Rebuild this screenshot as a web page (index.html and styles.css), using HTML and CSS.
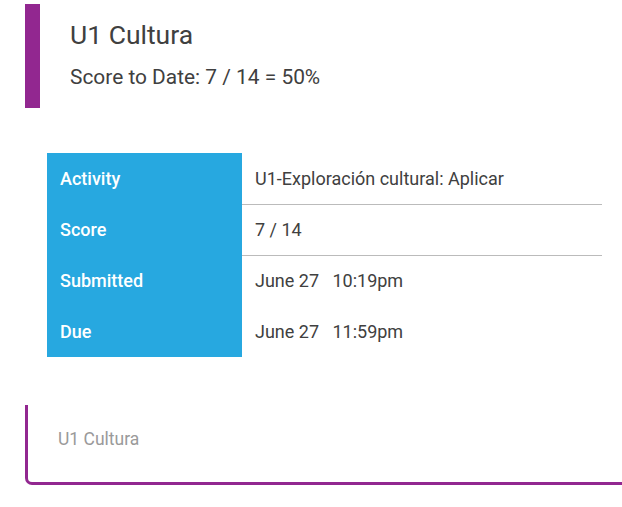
FILE: index.html
```html
<!DOCTYPE html>
<html lang="es">
<head>
  <meta charset="UTF-8" />
  <meta name="viewport" content="width=device-width, initial-scale=1.0"/>
  <title>U1 Cultura</title>
  <link rel="stylesheet" href="styles.css">
</head>
<body>
  <div class="unit-header">
    <h2>U1 Cultura</h2>
    <p class="score-to-date">Score to Date: 7 / 14 = 50%</p>
  </div>

  <table class="details">
    <tbody>
      <tr>
        <th>Activity</th>
        <td>U1-Exploración cultural: Aplicar</td>
      </tr>
      <tr>
        <th>Score</th>
        <td>7 / 14</td>
      </tr>
      <tr>
        <th>Submitted</th>
        <td>June 27&nbsp;&nbsp; 10:19pm</td>
      </tr>
      <tr>
        <th>Due</th>
        <td>June 27&nbsp;&nbsp; 11:59pm</td>
      </tr>
    </tbody>
  </table>

  <div class="unit-footer">
    <span>U1 Cultura</span>
  </div>
</body>
</html>
```

FILE: styles.css
```css
body {
  font-family: Roboto, "Liberation Sans", Arial, sans-serif;
  background-color: #fff;
  color: #404040;
  margin: 0;
  padding: 4px 0 0 25px;
}

.unit-header {
  border-left: 15px solid #922790;
  height: 104px;
  padding-left: 30px;
  box-sizing: border-box;
}

.unit-header h2 {
  margin: 0;
  padding-top: 16px;
  font-size: 26.5px;
  font-weight: 400;
  line-height: 30px;
}

.score-to-date {
  margin: 14px 0 0;
  font-size: 20.9px;
  line-height: 26px;
}

.details {
  margin: 45px 0 0 22px;
  width: 555px;
  border-collapse: collapse;
  font-size: 18px;
}

.details th,
.details td {
  height: 51px;
  padding: 0 13px;
  text-align: left;
  vertical-align: middle;
  box-sizing: border-box;
}

.details th {
  width: 195px;
  background-color: #27a8e0;
  color: #fff;
  font-weight: 500;
}

.details td {
  color: #404040;
}

.details tr:nth-child(1) td,
.details tr:nth-child(2) td {
  border-bottom: 1px solid #bbb;
}

.unit-footer {
  margin-top: 48px;
  height: 80px;
  border-left: 3px solid #922790;
  border-bottom: 3px solid #922790;
  border-bottom-left-radius: 7px;
  box-sizing: border-box;
  padding: 24px 0 0 30px;
  font-size: 17.5px;
  color: #9a9a9a;
}
```
